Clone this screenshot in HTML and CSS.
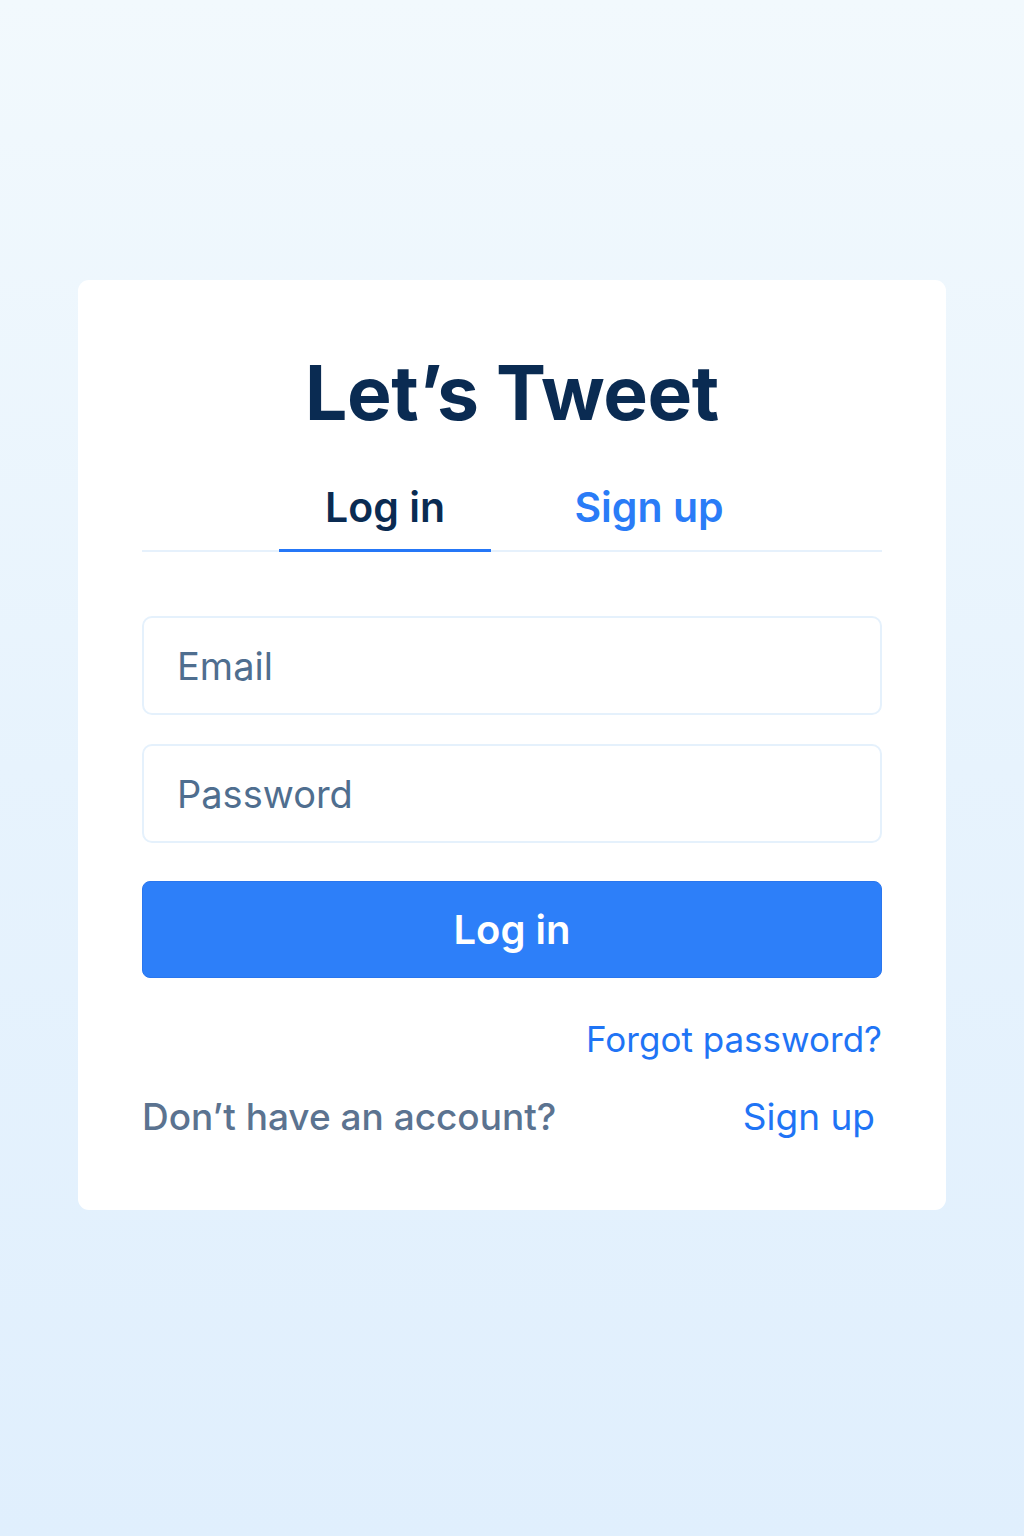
FILE: index.html
```html
<!DOCTYPE html>
<html lang="en">
<head>
<meta charset="utf-8">
<title>Let's Tweet</title>
<link rel="stylesheet" href="styles.css">
</head>
<body>
<main class="page">
  <section class="card">
    <h1 class="title">Let’s Tweet</h1>
    <nav class="tabs">
      <a class="tab tab-active">Log in</a>
      <a class="tab tab-link">Sign up</a>
    </nav>
    <form class="form">
      <div class="field"><span class="placeholder">Email</span></div>
      <div class="field field-second"><span class="placeholder">Password</span></div>
      <button type="button" class="btn">Log in</button>
    </form>
    <div class="forgot-row"><a class="link">Forgot password?</a></div>
    <div class="signup-row">
      <span class="muted">Don’t have an account?</span>
      <a class="link link-signup">Sign up</a>
    </div>
  </section>
</main>
</body>
</html>
```
FILE: styles.css
```css
* { box-sizing: border-box; }
html, body { margin: 0; padding: 0; }
body {
  font-family: Inter, "Noto Sans", "Liberation Sans", sans-serif;
  background: linear-gradient(180deg, #f2f9fd 0%, #e7f3fd 50%, #e0effd 100%);
  min-height: 1536px;
}
.page {
  padding-top: 280px;
  display: flex;
  justify-content: center;
}
.card {
  width: 868px;
  height: 930px;
  background: #ffffff;
  border-radius: 11px;
  padding: 75px 64px 0;
}
.title {
  margin: 0;
  font-size: 75px;
  line-height: 75px;
  font-weight: 700;
  color: #0a2b52;
  text-align: center;
  letter-spacing: -0.4px;
}
.tabs {
  margin-top: 57px;
  display: flex;
  border-bottom: 2px solid #e6f1fc;
  padding-left: 137px;
}
.tab {
  font-size: 41px;
  line-height: 41px;
  font-weight: 600;
  text-align: center;
  padding-bottom: 21px;
  margin-bottom: -2px;
  width: 212px;
  border-bottom: 3px solid transparent;
}
.tab-active {
  color: #0a2b52;
  border-bottom-color: #2577f7;
}
.tab-link {
  color: #2a7cf7;
  margin-left: 52px;
}
.form {
  margin-top: 64px;
  display: flex;
  flex-direction: column;
}
.field {
  height: 99px;
  border: 2px solid #e5f1fc;
  border-radius: 10px;
  display: flex;
  align-items: center;
  padding-left: 33px;
}
.field-second { margin-top: 29px; }
.placeholder {
  font-size: 38px;
  color: #4f6e8f;
  font-weight: 400;
}
.btn {
  margin-top: 38px;
  height: 97px;
  background: #2d7ff9;
  border: 1px solid #2a76ee;
  border-radius: 8px;
  color: #ffffff;
  font-family: inherit;
  font-size: 40px;
  font-weight: 600;
  padding: 0;
}
.forgot-row {
  margin-top: 44px;
  display: flex;
  justify-content: flex-end;
}
.link {
  color: #1f74f5;
  font-size: 35px;
  line-height: 35px;
}
.signup-row {
  margin-top: 41px;
  display: flex;
  justify-content: space-between;
  align-items: baseline;
  padding-right: 7px;
}
.muted {
  font-size: 37px;
  line-height: 37px;
  color: #5b7390;
  font-weight: 500;
}
.link-signup {
  font-size: 37px;
  line-height: 37px;
}
```
